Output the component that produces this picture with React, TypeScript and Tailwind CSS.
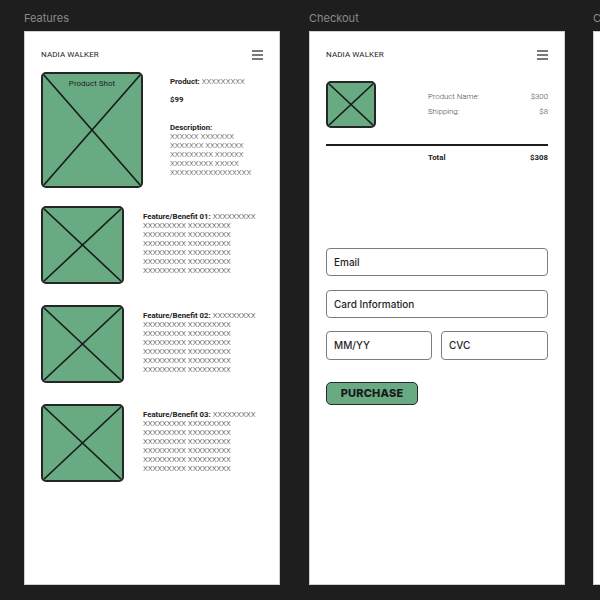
import React from "react";

const GREEN = "bg-[#68ab83]";

function Placeholder({ className, children }: { className: string; children?: React.ReactNode }) {
  return (
    <div className={`relative shrink-0 overflow-hidden rounded-[5px] border-2 border-[#262626] ${GREEN} ${className}`}>
      <svg className="absolute inset-0 h-full w-full" viewBox="0 0 100 100" preserveAspectRatio="none">
        <line x1="0" y1="0" x2="100" y2="100" stroke="#1a1a1a" strokeWidth="1.6" vectorEffect="non-scaling-stroke" />
        <line x1="100" y1="0" x2="0" y2="100" stroke="#1a1a1a" strokeWidth="1.6" vectorEffect="non-scaling-stroke" />
      </svg>
      {children}
    </div>
  );
}

function Header() {
  return (
    <div className="flex h-[10px] items-center justify-between">
      <span className="text-[8px] leading-[10px] font-normal tracking-[0.1px] text-[#222]">NADIA WALKER</span>
      <div className="flex w-[11px] flex-col gap-[2.5px]">
        <div className="h-[1.5px] bg-[#7a7a7a]" />
        <div className="h-[1.5px] bg-[#7a7a7a]" />
        <div className="h-[1.5px] bg-[#7a7a7a]" />
      </div>
    </div>
  );
}

const X9 = "XXXXXXXXX XXXXXXXXX";

function Feature({ n }: { n: string }) {
  return (
    <div className="flex">
      <Placeholder className="h-[78px] w-[83px]" />
      <div className="ml-[19px] pt-[6px] text-[7.8px] leading-[9px] text-[#333]">
        <div>
          <span className="font-bold text-[#222]">Feature/Benefit {n}:</span>{" "}
          <span className="font-light">XXXXXXXXX</span>
        </div>
        {[0, 1, 2, 3, 4, 5].map((i) => (
          <div key={i} className="font-light">{X9}</div>
        ))}
      </div>
    </div>
  );
}

function Field({ label, className = "" }: { label: string; className?: string }) {
  return (
    <div className={`flex items-center rounded-[4px] border border-[#7d7d7d] px-[7px] ${className}`}>
      <span className="text-[10px] font-medium text-[#1f1f1f]" style={{ fontFamily: "Inter, sans-serif" }}>{label}</span>
    </div>
  );
}

export default function App() {
  return (
    <div
      className="flex h-[600px] w-[600px] overflow-hidden bg-[#1e1e1e] pl-[24px]"
      style={{ fontFamily: "Roboto, 'Liberation Sans', sans-serif" }}
    >
      {/* Features */}
      <div className="flex w-[256px] shrink-0 flex-col">
        <div className="mt-[11px] h-[14px] text-[11px] leading-[14px] text-[#8a8a8a]" style={{ fontFamily: "Inter, sans-serif" }}>
          Features
        </div>
        <div className="mt-[6px] h-[554px] border border-[#cfcfcf] bg-white pl-[16px] pr-[16px]">
          <div className="mt-[18px]">
            <Header />
          </div>
          <div className="mt-[12px] flex">
            <Placeholder className="h-[116px] w-[102px]">
              <div className="relative pt-[5px] text-center text-[8px] leading-[10px] text-[#222]">Product Shot</div>
            </Placeholder>
            <div className="ml-[27px] pt-[5px] text-[7.8px] text-[#222]">
              <div className="leading-[10px]">
                <span className="font-bold">Product:</span> <span className="font-light text-[#444]">XXXXXXXXX</span>
              </div>
              <div className="mt-[8px] leading-[10px] font-bold">$99</div>
              <div className="mt-[18px] leading-[9px]">
                <div className="font-bold">Description:</div>
                <div className="font-light text-[#444]">XXXXXX XXXXXXX</div>
                <div className="font-light text-[#444]">XXXXXXX XXXXXXXX</div>
                <div className="font-light text-[#444]">XXXXXXXXX XXXXXX</div>
                <div className="font-light text-[#444]">XXXXXXXXX XXXXX</div>
                <div className="font-light text-[#444]">XXXXXXXXXXXXXXXXX</div>
              </div>
            </div>
          </div>
          <div className="mt-[18px] flex flex-col gap-[21px]">
            <Feature n="01" />
            <Feature n="02" />
            <Feature n="03" />
          </div>
        </div>
      </div>

      {/* Checkout */}
      <div className="ml-[29px] flex w-[256px] shrink-0 flex-col">
        <div className="mt-[11px] h-[14px] text-[11px] leading-[14px] text-[#8a8a8a]" style={{ fontFamily: "Inter, sans-serif" }}>
          Checkout
        </div>
        <div className="mt-[6px] h-[554px] border border-[#cfcfcf] bg-white pl-[16px] pr-[16px]">
          <div className="mt-[18px]">
            <Header />
          </div>
          <div className="mt-[21px] flex">
            <Placeholder className="h-[47px] w-[50px]" />
            <div className="ml-auto mt-[11px] flex w-[120px] flex-col gap-[5px] text-[7.8px] leading-[10px] font-light text-[#444]">
              <div className="flex justify-between">
                <span>Product Name:</span>
                <span>$300</span>
              </div>
              <div className="flex justify-between">
                <span>Shipping:</span>
                <span>$8</span>
              </div>
            </div>
          </div>
          <div className="mt-[16px] h-[2px] bg-[#1e1e1e]" />
          <div className="mt-[7px] ml-auto flex w-[120px] justify-between text-[7.8px] leading-[10px] font-bold text-[#222]">
            <span>Total</span>
            <span>$308</span>
          </div>
          <div className="mt-[85px] flex flex-col gap-[14px]">
            <Field label="Email" className="h-[28px]" />
            <Field label="Card Information" className="h-[28px]" />
          </div>
          <div className="mt-[13px] flex gap-[9px]">
            <Field label="MM/YY" className="h-[29px] w-[106px]" />
            <Field label="CVC" className="h-[29px] flex-1" />
          </div>
          <button
            className={`mt-[22px] flex h-[23px] w-[92px] items-center justify-center rounded-[5px] border border-[#2a2a2a] ${GREEN}`}
          >
            <span className="text-[11px] font-extrabold tracking-[0.2px] text-[#1a1a1a]" style={{ fontFamily: "Inter, sans-serif" }}>
              PURCHASE
            </span>
          </button>
        </div>
      </div>

      {/* Third frame (clipped) */}
      <div className="ml-[28px] flex w-[256px] shrink-0 flex-col">
        <div className="mt-[11px] h-[14px] text-[11px] leading-[14px] text-[#8a8a8a]" style={{ fontFamily: "Inter, sans-serif" }}>
          Confirmation
        </div>
        <div className="mt-[6px] h-[554px] border border-[#cfcfcf] bg-white" />
      </div>
    </div>
  );
}
